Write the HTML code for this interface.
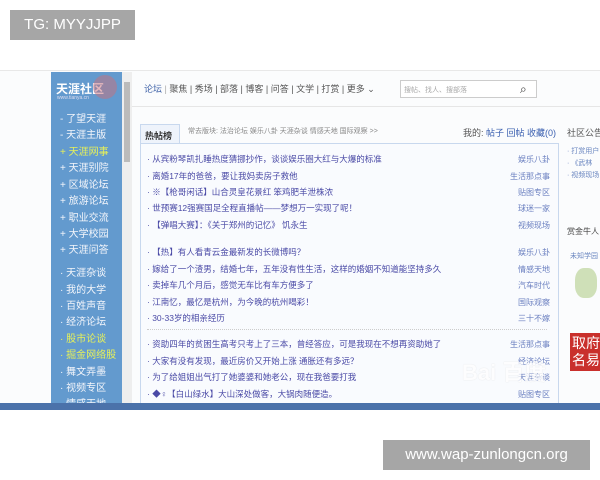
<!DOCTYPE html>
<html><head><meta charset="utf-8"><style>
*{margin:0;padding:0;box-sizing:border-box}
body{width:600px;height:480px;background:#fff;position:relative;overflow:hidden;font-family:"Liberation Sans","Noto Sans CJK SC",sans-serif}
.a{position:absolute;white-space:nowrap}
.lab{background:#a6a6a6;color:#fff;font-size:15px;text-align:center}
.side{left:51px;top:72px;width:71px;height:333px;background:#639ace}
.si{font-size:10px;color:#f4f6fb;left:60px}
.si.y{color:#e6f05a}
.it{font-size:8.5px;color:#4a4aa6;left:147px}
.cat{font-size:8px;color:#6a7fc0;right:50px}
.nav{font-size:9px;color:#555}
</style></head><body>
<div class="a lab" style="left:10px;top:10px;width:125px;height:30px;line-height:30px">TG: MYYJJPP</div>
<div class="a" style="left:0;top:70px;width:600px;height:340px;background:#fbfcfd;border-top:1px solid #e8e8e8"></div>
<div class="a side"></div>
<div class="a" style="left:56px;top:80px;font-size:12px;font-weight:bold;color:#fff">天涯社区</div>
<div class="a" style="left:57px;top:95px;font-size:5px;color:#dde">www.tianya.cn</div>
<div class="a" style="left:93px;top:75px;width:24px;height:24px;border-radius:50%;background:#c9707a;opacity:.5"></div>
<div class="a si" style="top:110px">- 了望天涯</div>
<div class="a si" style="top:126px">- 天涯主版</div>
<div class="a si y" style="top:143px">+ 天涯网事</div>
<div class="a si" style="top:159px">+ 天涯别院</div>
<div class="a si" style="top:176px">+ 区域论坛</div>
<div class="a si" style="top:192px">+ 旅游论坛</div>
<div class="a si" style="top:209px">+ 职业交流</div>
<div class="a si" style="top:225px">+ 大学校园</div>
<div class="a si" style="top:241px">+ 天涯问答</div>
<div class="a si" style="top:264px">· 天涯杂谈</div>
<div class="a si" style="top:281px">· 我的大学</div>
<div class="a si" style="top:297px">· 百姓声音</div>
<div class="a si" style="top:313px">· 经济论坛</div>
<div class="a si y" style="top:330px">· 股市论谈</div>
<div class="a si y" style="top:346px">· 掘金网络股</div>
<div class="a si" style="top:363px">· 舞文弄墨</div>
<div class="a si" style="top:379px">· 视频专区</div>
<div class="a si" style="top:395px">· 情感天地</div>
<div class="a" style="left:122px;top:72px;width:10px;height:333px;background:#eee"></div>
<div class="a" style="left:124px;top:82px;width:6px;height:80px;background:#bbb"></div>
<div class="a nav" style="left:144px;top:82px;color:#4466aa">论坛 <span style="color:#aaa">|</span> <span style="color:#555">聚焦 | 秀场 | 部落 | 博客 | 问答 | 文学 | 打赏 | 更多 ⌄</span></div>
<div class="a" style="left:400px;top:80px;width:137px;height:18px;border:1px solid #ccc;background:#fff;font-size:7px;color:#aaa;padding:4px 3px">搜帖、找人、搜部落</div>
<div class="a" style="left:520px;top:82px;font-size:12px;color:#333">⌕</div>
<div class="a" style="left:132px;top:106px;width:468px;height:1px;background:#e6e6e6"></div>
<div class="a" style="left:140px;top:124px;width:40px;height:20px;background:#eef3fb;border:1px solid #c8d8ee;border-bottom:none;font-size:9px;font-weight:bold;color:#333;padding:4px 4px">热帖榜</div>
<div class="a" style="left:188px;top:126px;font-size:7px;color:#888">常去版块: 法治论坛 娱乐八卦 天涯杂谈 情感天地 国际观察 &gt;&gt;</div>
<div class="a" style="left:463px;top:126px;font-size:9px;color:#555">我的: <span style="color:#3a5fb0">帖子 回帖 收藏(0)</span></div>
<div class="a" style="left:567px;top:126px;font-size:9px;color:#555">社区公告</div>
<div class="a" style="left:140px;top:143px;width:419px;height:265px;border:1px solid #c8d8ee;background:#f9fbfe"></div>
<div class="a it" style="top:153px">· 从宾粉琴凯扎睡热度猜挪抄作，谈谈娱乐圈大红与大爆的标准</div>
<div class="a it" style="top:170px">· 离婚17年的爸爸，要让我妈卖房子救他</div>
<div class="a it" style="top:186px">· ※【枪哥闲话】山合灵皇花景红 笨鸡肥羊泄株浓</div>
<div class="a it" style="top:202px">· 世预赛12强赛国足全程直播帖——梦想万一实现了呢！</div>
<div class="a it" style="top:219px">· 【弹唱大赛】：《关于郑州的记忆》 饥永生</div>
<div class="a it" style="top:246px">· 【热】有人看青云金最新发的长微博吗？</div>
<div class="a it" style="top:263px">· 嫁给了一个渣男，结婚七年，五年没有性生活，这样的婚姻不知道能坚持多久</div>
<div class="a it" style="top:279px">· 卖掉车几个月后，感觉无车比有车方便多了</div>
<div class="a it" style="top:296px">· 江南忆，最忆是杭州，为今晚的杭州喝彩！</div>
<div class="a it" style="top:312px">· 30-33岁的相亲经历</div>
<div class="a" style="left:147px;top:329px;width:400px;border-top:1px dotted #ccc"></div>
<div class="a it" style="top:338px">· 资助四年的贫困生高考只考上了三本，曾经答应，可是我现在不想再资助她了</div>
<div class="a it" style="top:355px">· 大家有没有发现，最近房价又开始上涨 通胀还有多远？</div>
<div class="a it" style="top:371px">· 为了给姐姐出气打了她婆婆和她老公，现在我爸要打我</div>
<div class="a it" style="top:388px">· ◆♀【白山绿水】大山深处做客，大锅肉随便造。</div>
<div class="a cat" style="top:154px">娱乐八卦</div>
<div class="a cat" style="top:171px">生活那点事</div>
<div class="a cat" style="top:187px">贴图专区</div>
<div class="a cat" style="top:203px">球迷一家</div>
<div class="a cat" style="top:220px">视频现场</div>
<div class="a cat" style="top:247px">娱乐八卦</div>
<div class="a cat" style="top:264px">情感天地</div>
<div class="a cat" style="top:280px">汽车时代</div>
<div class="a cat" style="top:297px">国际观察</div>
<div class="a cat" style="top:313px">三十不嫁</div>
<div class="a cat" style="top:339px">生活那点事</div>
<div class="a cat" style="top:356px">经济论坛</div>
<div class="a cat" style="top:372px">天涯杂谈</div>
<div class="a cat" style="top:389px">贴图专区</div>
<div class="a" style="left:462px;top:355px;font-size:22px;color:#fff;opacity:.7;font-weight:bold;text-shadow:0 0 1px #ccc">Bai 百度</div>
<div class="a" style="left:567px;top:146px;font-size:7px;color:#6a86c0;line-height:12px">· 打赏用户<br>· 《武林<br>· 视频现场</div>
<div class="a" style="left:567px;top:226px;font-size:8px;color:#444">赏金牛人</div>
<div class="a" style="left:570px;top:251px;font-size:7px;color:#6a86c0">未知学园</div>
<div class="a" style="left:575px;top:268px;width:22px;height:30px;background:#cfe0b8;border-radius:40%"></div>
<div class="a" style="left:570px;top:333px;width:30px;height:38px;background:#c9302c;color:#fff;font-size:14px;line-height:17px;padding:2px">取府<br>名易</div>
<div class="a" style="left:0;top:403px;width:600px;height:7px;background:#4b72aa"></div>
<div class="a lab" style="left:383px;top:440px;width:207px;height:30px;line-height:30px">www.wap-zunlongcn.org</div>
</body></html>
